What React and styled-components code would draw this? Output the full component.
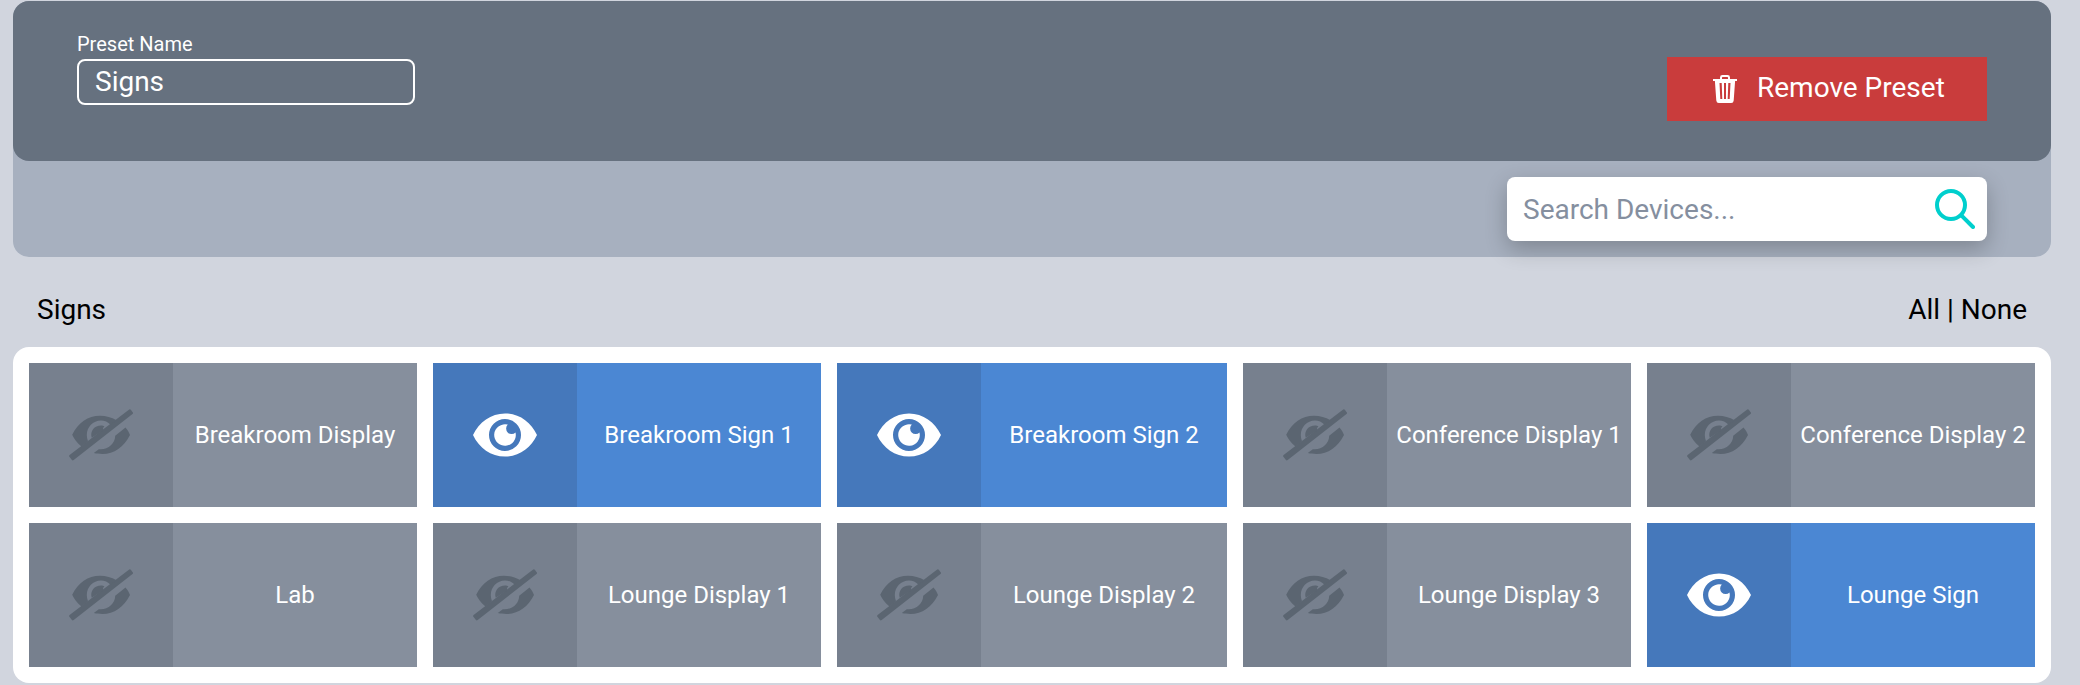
import React from 'react';
import styled, { createGlobalStyle } from 'styled-components';

const GlobalStyle = createGlobalStyle`
  * { box-sizing: border-box; }
  body {
    margin: 0;
    background: #d1d5de;
    font-family: Roboto, "Liberation Sans", sans-serif;
    color: #000;
  }
`;

const Page = styled.main`
  height: 685px;
  padding: 1px 29px 0 13px;
  overflow: hidden;
`;

const Toolbar = styled.header`
  height: 256px;
  border-radius: 16px;
  background: #a7b0bf;
`;

const PresetBar = styled.div`
  display: flex;
  justify-content: space-between;
  align-items: flex-start;
  height: 160px;
  padding: 31px 64px 0;
  border-radius: 16px;
  background: #66717f;
`;

const Field = styled.label`
  display: flex;
  flex-direction: column;
  color: #fff;
  font-size: 20px;
  line-height: 24px;
`;

const NameInput = styled.input`
  width: 338px;
  height: 46px;
  margin-top: 3px;
  padding: 0 16px 2px;
  border: 2px solid #fff;
  border-radius: 8px;
  background: transparent;
  color: #fff;
  font: 28px Roboto, sans-serif;
  outline: none;
`;

const RemoveButton = styled.button`
  display: flex;
  align-items: center;
  width: 320px;
  height: 64px;
  margin-top: 25px;
  padding: 0 0 4px 46px;
  border: 0;
  background: #c93c3c;
  color: #fff;
  font: 28px Roboto, sans-serif;
  gap: 20px;
  svg { position: relative; top: 2px; }
`;

const SearchRow = styled.div`
  display: flex;
  justify-content: flex-end;
  padding: 16px 64px;
`;

const SearchBox = styled.div`
  display: flex;
  align-items: center;
  width: 480px;
  height: 64px;
  padding: 0 12px 0 16px;
  border-radius: 8px;
  background: #fff;
  box-shadow: 0 8px 22px rgba(0, 0, 0, 0.24);
`;

const SearchInput = styled.input`
  flex: 1;
  min-width: 0;
  padding: 0;
  border: 0;
  background: transparent;
  font: 28px Roboto, sans-serif;
  outline: none;
  &::placeholder { color: #858f9f; opacity: 1; }
`;

const GroupHeader = styled.div`
  display: flex;
  justify-content: space-between;
  align-items: center;
  height: 90px;
  padding: 14px 24px 0;
  font-size: 28px;
`;

const Panel = styled.section`
  display: grid;
  grid-template-columns: 388px 388px 1fr 388px 388px;
  gap: 16px;
  padding: 16px;
  border-radius: 16px;
  background: #fff;
`;

const Tile = styled.div`
  display: flex;
  height: 144px;
  background: ${(p) => (p.$on ? '#4b87d3' : '#868f9d')};
`;

const TileIcon = styled.div`
  display: flex;
  align-items: center;
  justify-content: center;
  flex: none;
  width: 144px;
  background: ${(p) => (p.$on ? '#4578bb' : '#77808e')};
  color: ${(p) => (p.$on ? '#fff' : '#5b6571')};
`;

const TileName = styled.div`
  display: flex;
  align-items: center;
  justify-content: center;
  flex: 1;
  color: #fff;
  font-size: 24px;
  white-space: nowrap;
`;

const Eye = () => (
  <svg width="64" height="44" viewBox="0 0 64 44" fill="currentColor">
    <path fillRule="evenodd" d="M0 22C6 9 18 .4 32 .4S58 9 64 22C58 35 46 43.6 32 43.6S6 35 0 22ZM32 6a16 16 0 1 0 0 32a16 16 0 0 0 0-32Z" />
    <path d="M34.8 11.6A10.8 10.8 0 1 0 42.5 19.5A5 5 0 0 1 34.8 11.6Z" />
  </svg>
);

const EyeOff = () => (
  <svg width="64" height="52" viewBox="0 0 64 52" fill="currentColor">
    <path d="M60.2.6Q61.2 0 62 .9L63.7 3.2Q64.4 4.2 63.5 5L4.7 51Q3.7 51.8 2.9 50.9L.4 47.7Q-.3 46.8.6 46Z" />
    <path d="M12.5 37.5C8 34 5 30 3.2 25.8C9 13.8 19 6.8 31 6.8C37 6.8 42.5 8.4 47.5 11.2L41.6 15.8C39 13 35.5 11.5 32 11.5C24 11.5 17.8 18 17.8 26C17.8 28 18.2 30 19 32.2Z" />
    <path d="M22.7 28.8C20.8 22 25.5 16.5 32 16.5C33.5 16.5 34.5 16.8 35.5 17.3C34 18.5 33.7 20 34.3 21.2Z" />
    <path d="M56.5 18.5C58.8 21 60.1 23.5 61 26C55 38 45 45 33.5 45C30 45 27.5 44.7 24.8 44.1L29.8 40.2C38.5 41.3 46.2 34.8 46.2 26.7Z" />
  </svg>
);

const Trash = () => (
  <svg width="24" height="28" viewBox="0 0 24 28">
    <path d="M8 4V2.4Q8 1 9.5 1h5Q16 1 16 2.4V4" fill="none" stroke="#fff" strokeWidth="2" />
    <path fill="#fff" fillRule="evenodd" d="M0 4h24v2h-1.9L20.7 25.5Q20.5 28 18.2 28H5.8Q3.5 28 3.3 25.5L1.9 6H0ZM6.5 8l.8 16h2L8.7 8ZM11 8v16h2V8ZM15.3 8l-.6 16h2l.8-16Z" />
  </svg>
);

const SearchIcon = () => (
  <svg width="40" height="40" viewBox="0 0 40 40" fill="none" stroke="#00cfcd" strokeWidth="4" strokeLinecap="round">
    <circle cx="16" cy="16" r="14" />
    <path d="M26.3 26.3 38 38" />
  </svg>
);

const devices = [
  ['Breakroom Display', false],
  ['Breakroom Sign 1', true],
  ['Breakroom Sign 2', true],
  ['Conference Display 1', false],
  ['Conference Display 2', false],
  ['Lab', false],
  ['Lounge Display 1', false],
  ['Lounge Display 2', false],
  ['Lounge Display 3', false],
  ['Lounge Sign', true],
];

export default function App() {
  return (
    <>
      <GlobalStyle />
      <Page>
        <Toolbar>
          <PresetBar>
            <Field>
              Preset Name
              <NameInput defaultValue="Signs" />
            </Field>
            <RemoveButton>
              <Trash />
              Remove Preset
            </RemoveButton>
          </PresetBar>
          <SearchRow>
            <SearchBox>
              <SearchInput placeholder="Search Devices..." />
              <SearchIcon />
            </SearchBox>
          </SearchRow>
        </Toolbar>
        <GroupHeader>
          <span>Signs</span>
          <span>All | None</span>
        </GroupHeader>
        <Panel>
          {devices.map(([name, on]) => (
            <Tile key={name} $on={on}>
              <TileIcon $on={on}>{on ? <Eye /> : <EyeOff />}</TileIcon>
              <TileName>{name}</TileName>
            </Tile>
          ))}
        </Panel>
      </Page>
    </>
  );
}
